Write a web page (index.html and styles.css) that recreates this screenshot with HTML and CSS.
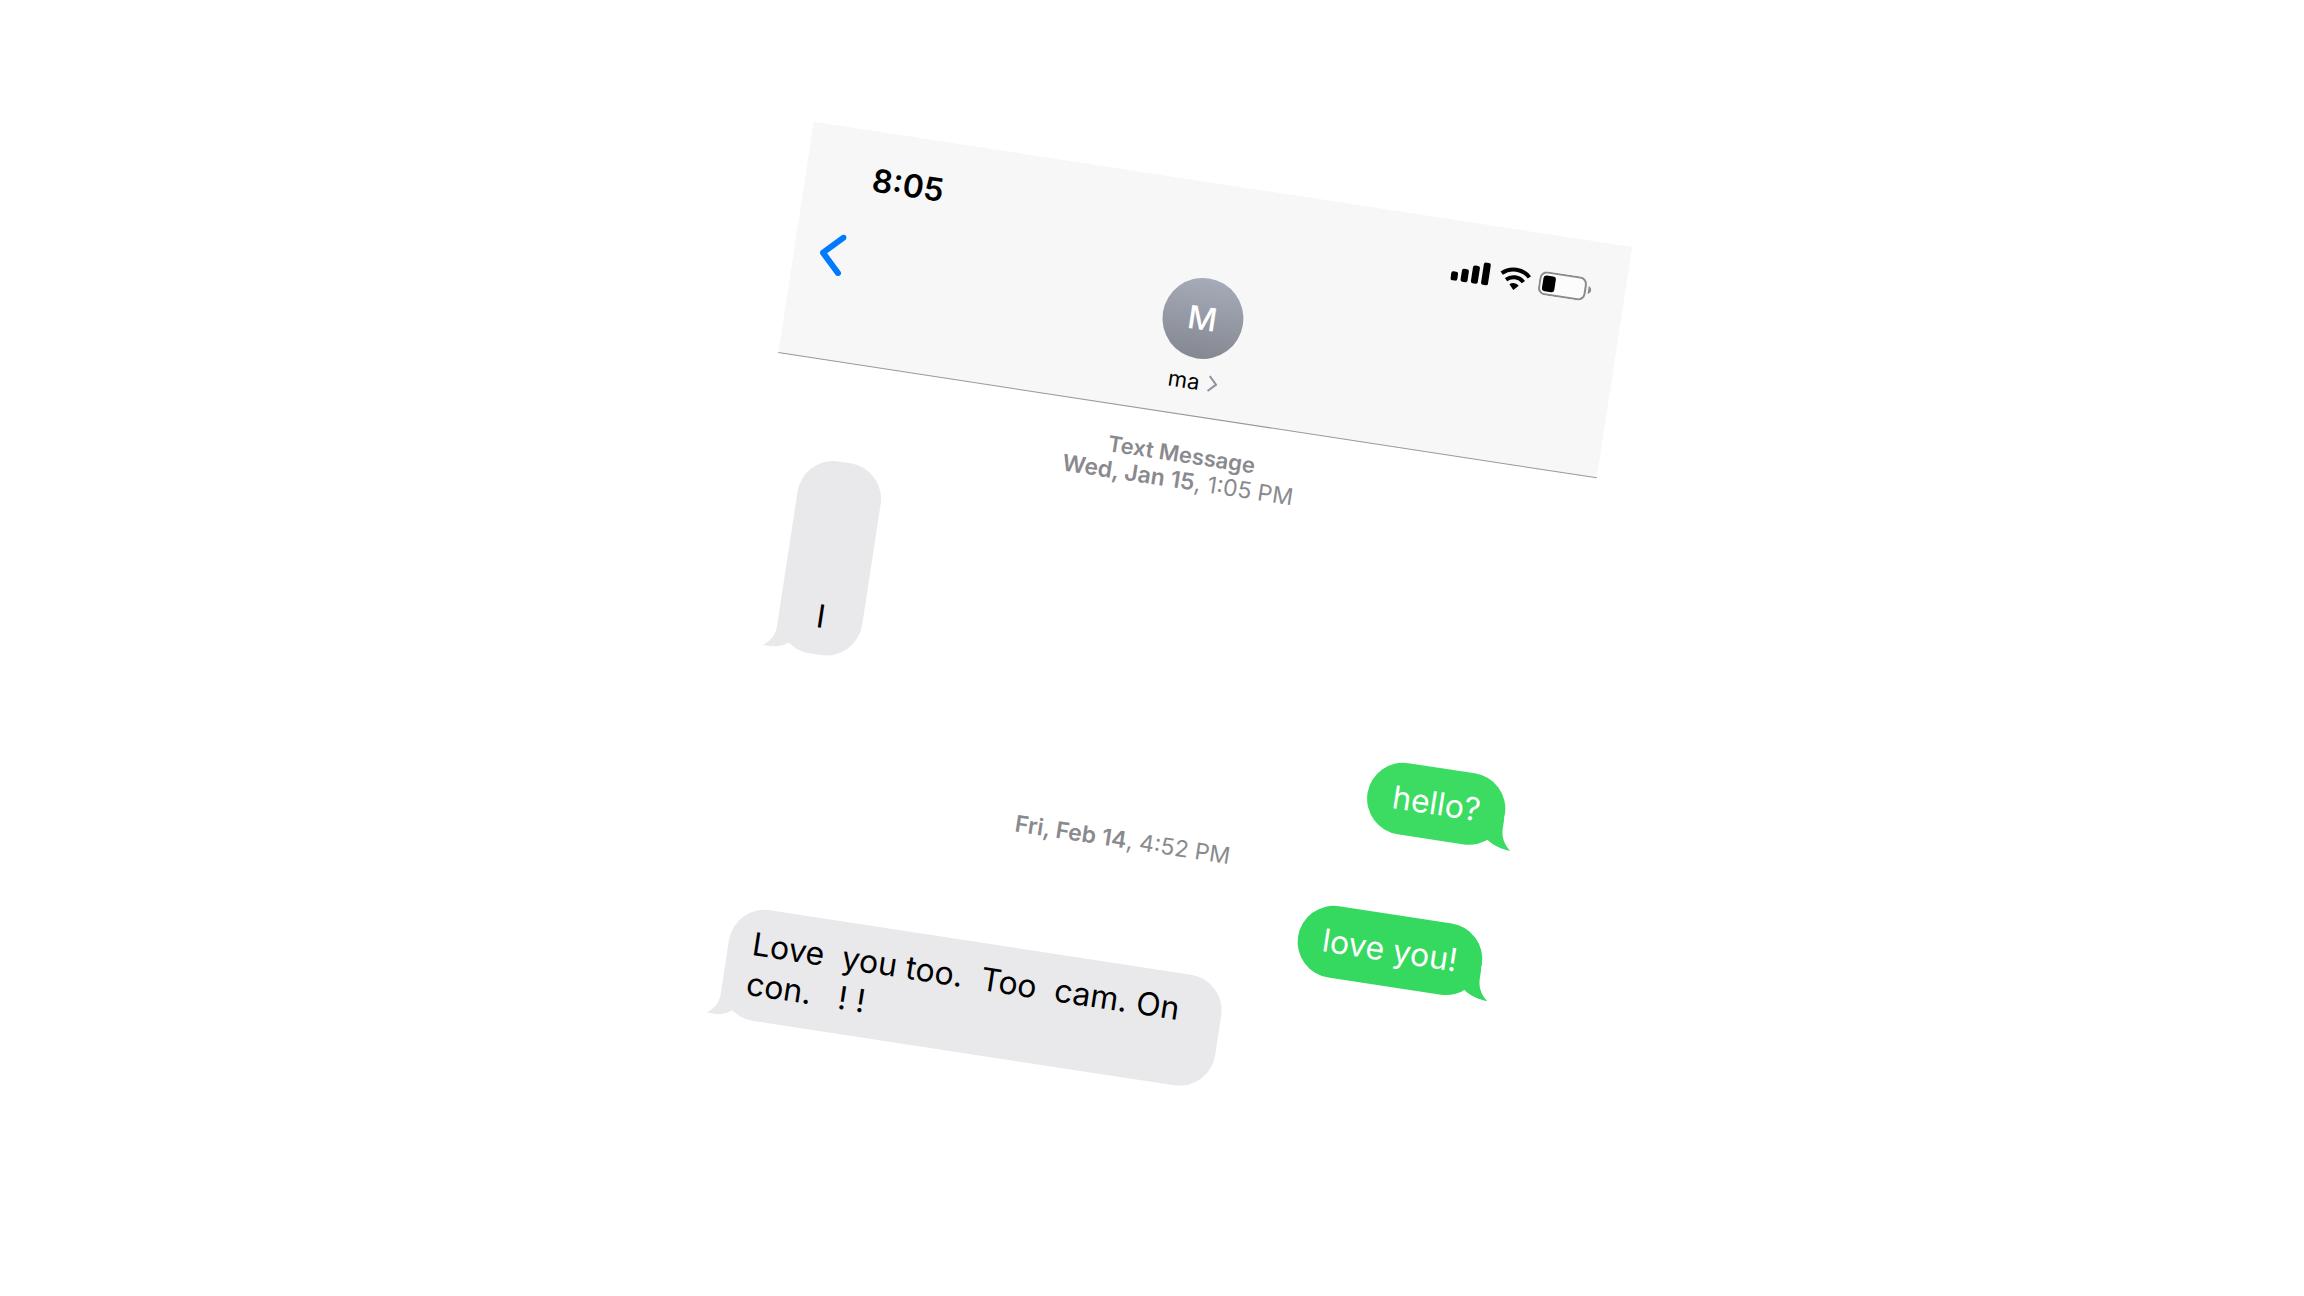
FILE: index.html
```html
<!DOCTYPE html>
<html lang="en">
<head>
<meta charset="utf-8">
<meta name="viewport" content="width=device-width, initial-scale=1">
<title>Messages</title>
<link rel="stylesheet" href="styles.css">
</head>
<body>
<main class="phone">
  <header class="header">
    <div class="status">
      <time class="clock">8:05</time>
      <div class="indicators">
        <svg class="signal" width="40" height="24" viewBox="0 0 40 24" aria-hidden="true">
          <rect x="0" y="14" width="7" height="9" rx="2"/>
          <rect x="10.3" y="10" width="7" height="13" rx="2"/>
          <rect x="20.700" y="5" width="7" height="18" rx="2"/>
          <rect x="31" y="0.5" width="7" height="22.5" rx="2"/>
        </svg>
        <svg class="wifi" width="32" height="24" viewBox="0 0 32 24" aria-hidden="true">
          <path class="wave" d="M2 8.6a20 20 0 0 1 28 0"/>
          <path class="wave" d="M7.2 14.2a12.6 12.6 0 0 1 17.6 0"/>
          <path d="M11.3 18.4a6.8 6.8 0 0 1 9.4 0L16 23.4z"/>
        </svg>
        <svg class="battery" width="54" height="24" viewBox="0 0 54 24" aria-hidden="true">
          <rect class="case" x="1" y="1" width="46" height="22" rx="6.5"/>
          <rect x="4" y="4" width="12.5" height="16" rx="3"/>
          <path class="nub" d="M50 8c4 1.500 4 6.500 0 8z"/>
        </svg>
      </div>
    </div>
    <nav class="nav">
      <button class="back" type="button" aria-label="Back">
        <svg width="24" height="42" viewBox="0 0 24 42" aria-hidden="true"><path d="M21 3L3 21l18 18"/></svg>
      </button>
      <a class="contact" href="#contact">
        <span class="avatar">M</span>
        <span class="name">ma
          <svg width="10" height="18" viewBox="0 0 10 18" aria-hidden="true"><path d="M1 1.500L8.500 9 1 16.500"/></svg>
        </span>
      </a>
    </nav>
  </header>
  <section class="thread">
    <p class="stamp"><b class="service">Text Message</b><b>Wed, Jan 15</b>, 1:05 PM</p>
    <p class="bubble received short"><br><br><br>I<svg class="tail" width="42" height="32" viewBox="0 0 42 32" aria-hidden="true"><path d="M12 0v10C12 19 8 26 1 30.500C10 32 19 30 26 24.500L42 12V0z"/></svg></p>
    <p class="bubble sent">hello?<svg class="tail" width="42" height="32" viewBox="0 0 42 32" aria-hidden="true"><path d="M12 0v10C12 19 8 26 1 31.500C10 31 19 29 26 23.500L42 12V0z"/></svg></p>
    <p class="stamp later"><b>Fri, Feb 14</b>, 4:52 PM</p>
    <p class="bubble sent deep">love you!<svg class="tail" width="42" height="32" viewBox="0 0 42 32" aria-hidden="true"><path d="M12 0v10C12 19 8 26 1 31.500C10 31 19 29 26 23.500L42 12V0z"/></svg></p>
    <p class="bubble received wide">Love&nbsp; you too.&nbsp; Too&nbsp; cam. On<br>con.&nbsp;&nbsp; !&nbsp;!<svg class="tail" width="42" height="32" viewBox="0 0 42 32" aria-hidden="true"><path d="M12 0v10C12 19 8 26 1 30.500C10 32 19 30 26 24.500L42 12V0z"/></svg></p>
  </section>
</main>
</body>
</html>
```
FILE: styles.css
```css
* { box-sizing: border-box; }

body {
  margin: 0;
  min-height: 100vh;
  display: grid;
  place-items: center;
  overflow: hidden;
  background: #fff;
  color: #000;
  font-family: Inter, "Liberation Sans", sans-serif;
}

.phone {
  width: 100%;
  max-width: 828px;
  transform: rotate(8.7deg);
}

.header {
  padding-bottom: 20px;
  background: #f7f7f7;
  border-bottom: 1px solid #999;
}

.status {
  display: flex;
  justify-content: space-between;
  align-items: center;
  padding: 29px 33px 0 67px;
}

.clock {
  font-size: 32px;
  font-weight: 600;
  line-height: 40px;
}

.indicators {
  display: flex;
  gap: 8px;
}

.wave {
  fill: none;
  stroke: #000;
  stroke-width: 4;
}

.case {
  fill: #fcfcfc;
  stroke: #8c8c8c;
  stroke-width: 2;
}

.nub { fill: #8c8c8c; }

.nav {
  display: grid;
  grid-template-columns: 1fr auto 1fr;
  align-items: start;
  padding: 26px 26px 0;
}

.back {
  justify-self: start;
  margin: 12px 0 0;
  padding: 0;
  border: 0;
  background: none;
  cursor: pointer;
}

.back svg { display: block; }

.back path {
  fill: none;
  stroke: #007aff;
  stroke-width: 6;
  stroke-linecap: round;
  stroke-linejoin: round;
}

.contact {
  display: flex;
  flex-direction: column;
  align-items: center;
  gap: 9px;
  color: #000;
  text-decoration: none;
}

.avatar {
  width: 81px;
  height: 81px;
  border-radius: 50%;
  background: linear-gradient(#a6abb9, #858891);
  color: #fff;
  font-size: 32px;
  font-weight: 500;
  line-height: 81px;
  text-align: center;
}

.name {
  display: flex;
  align-items: center;
  gap: 8px;
  font-size: 22px;
  line-height: 28px;
}

.name path {
  fill: none;
  stroke: #8a959f;
  stroke-width: 2;
}

.thread {
  display: flex;
  flex-direction: column;
  gap: 18px;
  padding: 26px 40px;
}

.stamp {
  margin: 0 0 2px;
  color: #8a8a8e;
  font-size: 23px;
  line-height: 26px;
  text-align: center;
}

.stamp b { font-weight: 600; }

.stamp .service {
  display: block;
  font-size: 22px;
}

.stamp.later { margin-top: 16px; }

.bubble {
  position: relative;
  margin: 0;
  padding: 16px 25px;
  border-radius: 36px;
  font-size: 32px;
  line-height: 40px;
}

.received {
  align-self: flex-start;
  background: #e9e9eb;
  fill: #e9e9eb;
}

.sent {
  align-self: flex-end;
  background: #3bdc61;
  color: #fff;
  fill: #3bdc61;
}

.deep {
  background: #36d95f;
  fill: #36d95f;
}

.short {
  min-width: 84px;
  padding-bottom: 18px;
  text-align: center;
}

.wide {
  width: 100%;
  max-width: 498px;
  margin-bottom: 14px;
  padding-left: 24px;
}

/* Painted beneath the bubbles so that it never covers a message. */
.tail {
  position: absolute;
  z-index: -1;
  bottom: 0;
  left: -12px;
}

.sent .tail {
  left: auto;
  right: -12px;
  transform: scaleX(-1);
}
```
